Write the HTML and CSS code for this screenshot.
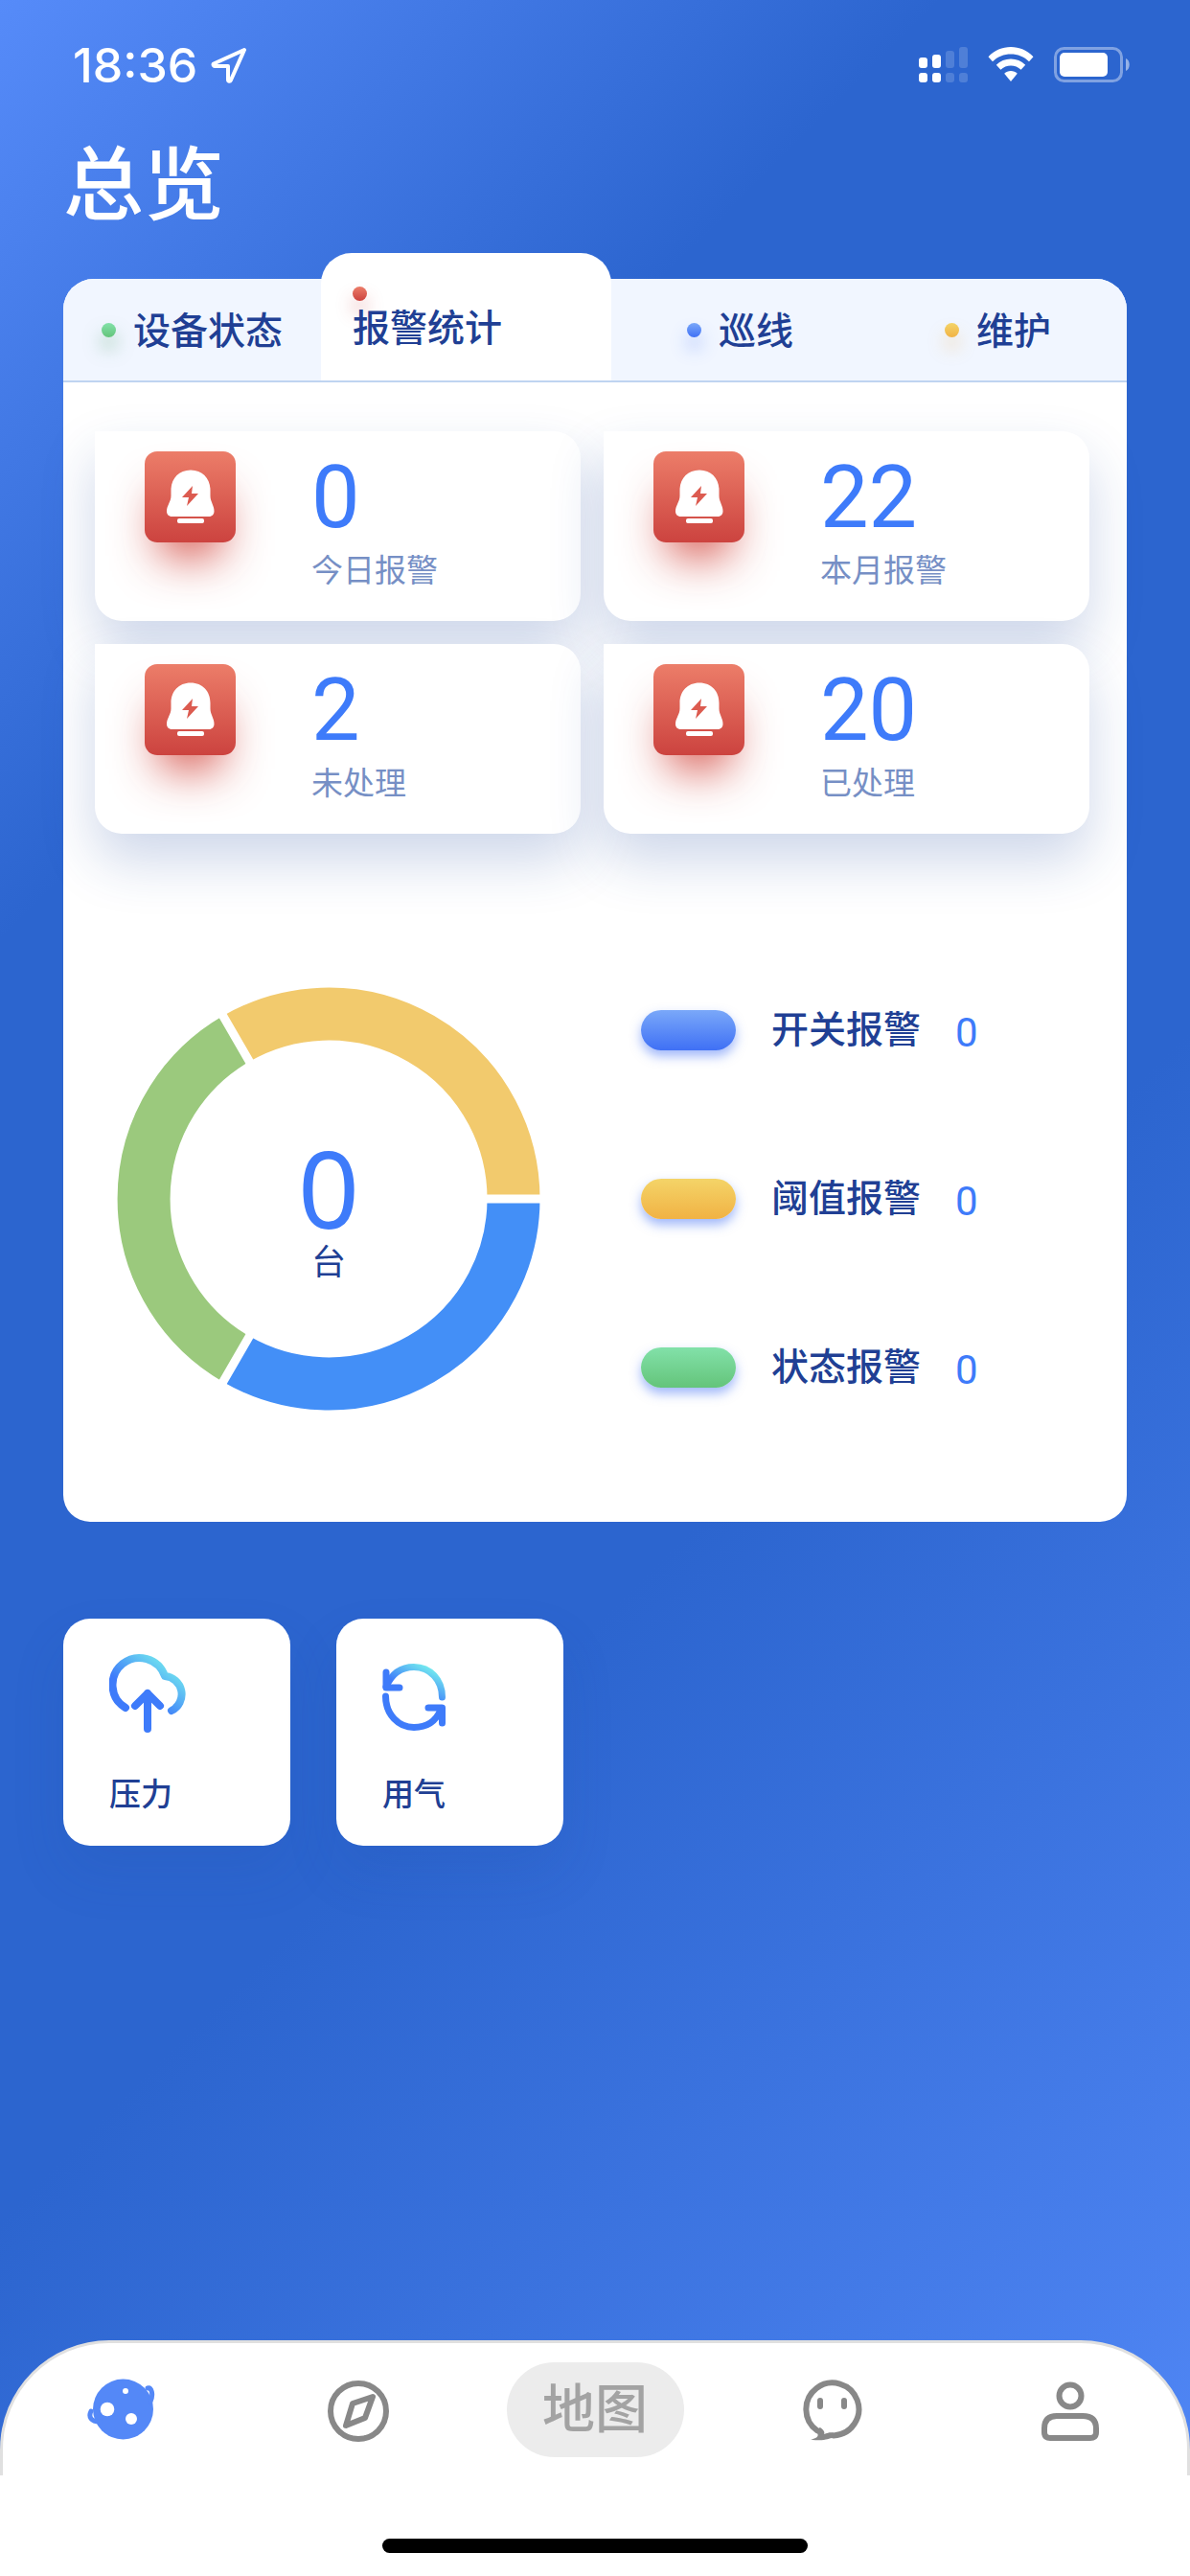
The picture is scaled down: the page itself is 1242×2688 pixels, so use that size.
FILE: index.html
```html
<!DOCTYPE html>
<html lang="zh-CN">

<head>
  <meta charset="UTF-8">
  <meta name="viewport" content="width=device-width, initial-scale=1.0">
  <title>总览</title>
  <link rel="stylesheet" href="styles.css">
</head>

<body>
  <!-- 公用图形 -->
  <svg class="defs" aria-hidden="true">
    <defs>
      <linearGradient id="cyan" x1="0.3" y1="0.65" x2="0.85" y2="0.1">
        <stop offset="0" stop-color="#3e7bfa" />
        <stop offset="1" stop-color="#72e8ef" />
      </linearGradient>
      <symbol id="bell" viewBox="0 0 95 95">
        <path fill="#fff" d="M48 19.500c-12.500 0-20.500 9-20.500 21v6c0 6-4.500 10-4.500 16 0 3 2 5.500 5.500 5.500h38.500c3.500 0 5.500-2.500 5.500-5.500 0-6-4-10-4-16v-6c0-12-8-21-20.500-21z" />
        <path fill="#dc5b50" d="M50 36l-11 12h7l-2 9 12-13h-7z" />
        <rect x="34" y="70" width="28" height="5" rx="2" fill="#fff" />
      </symbol>
    </defs>
  </svg>

  <!-- 状态栏 -->
  <header class="status-bar">
    <div class="status-left">
      <span>18:36</span>
      <svg width="38" height="38" viewBox="0 0 38 38" fill="none" stroke="#fff" stroke-width="4" stroke-linejoin="round" stroke-linecap="round">
        <path d="M35 3L3 17.500c-1 1 0 2.500 1 2.500h14v14c0 2 2 2.500 3 .5z" />
      </svg>
    </div>
    <div class="status-right">
      <svg width="51" height="38" viewBox="0 0 51 38" fill="#fff">
        <rect x="0" y="11" width="9" height="11" rx="3" />
        <rect x="14" y="8" width="9" height="14" rx="3" />
        <rect x="28" y="4" width="9" height="18" rx="3" opacity="0.17" />
        <rect x="42" y="0" width="9" height="22" rx="3" opacity="0.17" />
        <rect x="0" y="27" width="9" height="10" rx="3" />
        <rect x="14" y="27" width="9" height="10" rx="3" />
        <rect x="28" y="27" width="9" height="10" rx="3" opacity="0.17" />
        <rect x="42" y="27" width="9" height="10" rx="3" opacity="0.17" />
      </svg>
      <svg width="48" height="38" viewBox="0 0 48 38" fill="#fff">
        <path d="M24 0c9 0 17 3.500 23.500 10.200l-4.500 5C37.700 10 31.200 7.500 24 7.500S10.300 10 5 15.200l-4.500-5C7 3.500 15 0 24 0z" />
        <path d="M24 12.500c5.800 0 11 2.200 15.200 6.300l-4.600 5c-3-2.800-6.600-4.300-10.600-4.300s-7.600 1.500-10.600 4.300l-4.600-5c4.200-4.100 9.400-6.300 15.200-6.300z" />
        <path d="M24 25c2.600 0 4.900 1 6.800 2.800L24 36l-6.800-8.200c1.900-1.800 4.200-2.800 6.800-2.800z" />
      </svg>
      <svg width="80" height="38" viewBox="0 0 80 38">
        <rect x="1.500" y="1.500" width="69" height="34" rx="9" fill="none" stroke="#fff" stroke-opacity="0.4" stroke-width="3" />
        <rect x="6" y="6" width="50" height="25" rx="5" fill="#fff" />
        <path d="M75 12c5 2 5 11 0 13z" fill="#fff" fill-opacity="0.5" />
      </svg>
    </div>
  </header>

  <main>
    <h1>总览</h1>

    <!-- 统计面板 -->
    <section class="panel">
      <div class="tabs">
        <button class="tab"><i class="dot green"></i><span>设备状态</span></button>
        <button class="tab active"><i class="dot red"></i><span>报警统计</span></button>
        <button class="tab"><i class="dot blue"></i><span>巡线</span></button>
        <button class="tab"><i class="dot yellow"></i><span>维护</span></button>
      </div>

      <div class="stats">
        <div class="stat">
          <svg class="stat-icon"><use href="#bell" /></svg>
          <div class="stat-text">
            <strong>0</strong>
            <span>今日报警</span>
          </div>
        </div>
        <div class="stat">
          <svg class="stat-icon"><use href="#bell" /></svg>
          <div class="stat-text">
            <strong>22</strong>
            <span>本月报警</span>
          </div>
        </div>
        <div class="stat">
          <svg class="stat-icon"><use href="#bell" /></svg>
          <div class="stat-text">
            <strong>2</strong>
            <span>未处理</span>
          </div>
        </div>
        <div class="stat">
          <svg class="stat-icon"><use href="#bell" /></svg>
          <div class="stat-text">
            <strong>20</strong>
            <span>已处理</span>
          </div>
        </div>
      </div>

      <div class="chart">
        <div class="donut">
          <svg viewBox="-221 -221 442 442" fill="none" stroke-width="55">
            <path stroke="#438ff7" d="M193 0A193 193 0 0 1 -96.500 167.100" />
            <path stroke="#9bc97d" d="M-96.500 167.100A193 193 0 0 1 -96.500 -167.100" />
            <path stroke="#f2ca6d" d="M-96.500 -167.100A193 193 0 0 1 193 0" />
            <path stroke="#fff" stroke-width="9" d="M150 0H221M-75 129.900L-111 192.300M-75 -129.900L-111 -192.300" />
          </svg>
          <div class="donut-label">
            <strong>0</strong>
            <span>台</span>
          </div>
        </div>
        <ul class="legend">
          <li><i class="pill blue"></i><span>开关报警</span><b>0</b></li>
          <li><i class="pill yellow"></i><span>阈值报警</span><b>0</b></li>
          <li><i class="pill green"></i><span>状态报警</span><b>0</b></li>
        </ul>
      </div>
    </section>

    <!-- 快捷入口 -->
    <div class="shortcuts">
      <button class="shortcut">
        <svg width="80" height="84" viewBox="0 0 80 84" fill="none" stroke="url(#cyan)" stroke-width="8" stroke-linecap="round" stroke-linejoin="round">
          <path d="M17 58A28 28 0 1 1 58 25A19 19 0 0 1 65 61" />
          <path stroke="#3e7bfa" d="M40 80V43M27 56L40 43L53 56" />
        </svg>
        <span>压力</span>
      </button>
      <button class="shortcut">
        <svg width="80" height="84" viewBox="0 0 80 84" fill="none" stroke="url(#cyan)" stroke-width="7" stroke-linecap="round" stroke-linejoin="round">
          <path d="M4 36C10 22 20 15.500 33 15.500C50 15.500 62.500 29 62.500 47" />
          <path stroke="#3e7bfa" d="M4 21V37H18" />
          <path stroke="#3e7bfa" d="M3.500 46C3.500 65 17 78.500 33 78.500C46 78.500 56 72 61 60" />
          <path stroke="#3e7bfa" d="M48 58H62.500V74" />
        </svg>
        <span>用气</span>
      </button>
    </div>
  </main>

  <!-- 底部导航 -->
  <footer>
    <nav>
      <a href="#" aria-label="首页">
        <svg width="72" height="72" viewBox="0 0 72 72">
          <circle cx="37.500" cy="36" r="31.500" fill="#5488f7" />
          <path d="M63 14c4-1 6.500 6 3 14M4 38c-3 6 0 11 9 11" fill="none" stroke="#5488f7" stroke-width="5" stroke-linecap="round" />
          <circle cx="21" cy="36" r="7.300" fill="#fff" />
          <circle cx="46" cy="46" r="6" fill="#fff" />
          <circle cx="40" cy="17" r="3" fill="#fff" />
        </svg>
      </a>
      <a href="#" aria-label="发现">
        <svg width="72" height="72" viewBox="0 0 72 72" fill="none" stroke="#888" stroke-width="6" stroke-linejoin="round">
          <circle cx="36" cy="38" r="29" />
          <path d="M51 23L30 30L23 53L43 45z" />
        </svg>
      </a>
      <a href="#" class="map">地图</a>
      <a href="#" aria-label="消息">
        <svg width="72" height="72" viewBox="0 0 72 72" fill="none" stroke="#888" stroke-width="6" stroke-linecap="round">
          <path d="M21 58.400A27.500 27.500 0 1 1 38 63.400" />
          <path d="M24 27v6M49 27v6" />
          <path d="M18 58l6-3c4 3 5 5 4 7 4-1.500 6-2 10-1.600v5.600c-6 0-9 4-24 1.500 6-1 9-3 7-6.500z" fill="#888" stroke="none" />
        </svg>
      </a>
      <a href="#" aria-label="我的">
        <svg width="72" height="72" viewBox="0 0 72 72" fill="none" stroke="#888" stroke-width="6">
          <circle cx="38" cy="22" r="11.500" />
          <path d="M24 43H51Q65 43 65 56V60Q65 66 59 66H17Q11 66 11 60V56Q11 43 24 43z" />
        </svg>
      </a>
    </nav>
    <div class="home-area"><div class="home-indicator"></div></div>
  </footer>
</body>

</html>
```
FILE: styles.css
```css
/* 全局样式 */
* {
  box-sizing: border-box;
}

body {
  margin: 0;
  min-height: 100vh;
  display: flex;
  flex-direction: column;
  background: linear-gradient(135deg, #568bf9 0%, #2c65cf 25%, #2c65cf 59%, #5288f7 100%);
  font-family: Roboto, "Noto Sans CJK SC", sans-serif;
  color: #203f94;
}

button {
  border: none;
  background: none;
  padding: 0;
  font: inherit;
  color: inherit;
}

.defs {
  position: absolute;
  width: 0;
  height: 0;
}

/* 状态栏 */
.status-bar {
  display: flex;
  justify-content: space-between;
  align-items: center;
  height: 136px;
  padding: 0 62px 0 76px;
  color: #fff;
  font: 500 50px Inter, sans-serif;
}

.status-left {
  display: flex;
  align-items: center;
  gap: 14px;
}

.status-right {
  display: flex;
  align-items: center;
  gap: 21px;
}

main {
  padding: 0 66px;
}

h1 {
  margin: 0 0 37px;
  font-size: 84px;
  font-weight: 500;
  line-height: 118px;
  color: #fff;
}

/* 统计面板 */
.panel {
  background: #fff;
  border-radius: 32px 32px 28px 28px;
}

.tabs {
  display: flex;
  align-items: flex-end;
  height: 108px;
  background: #f1f6ff;
  border-bottom: 2px solid #bfd4f1;
  border-radius: 32px 32px 0 0;
}

.tab {
  flex: 1;
  display: flex;
  justify-content: center;
  align-items: center;
  gap: 18px;
  height: 106px;
  font-size: 39px;
  font-weight: 500;
  line-height: 54px;
}

.tab span {
  padding-top: 4px;
}

.tab.active {
  flex: 0 0 303px;
  flex-direction: column;
  align-items: flex-start;
  justify-content: flex-start;
  gap: 0;
  height: 133px;
  padding: 35px 33px 0;
  background: #fff;
  border-radius: 32px 32px 0 0;
}

.tab.active span {
  padding-top: 2px;
}

.dot {
  width: 15px;
  height: 15px;
  border-radius: 50%;
}

.green {
  background: linear-gradient(#82e1a9, #64c47a);
}

.red {
  background: linear-gradient(#ec7d69, #cc433f);
}

.blue {
  background: linear-gradient(#7aa8f9, #3f70f5);
}

.yellow {
  background: linear-gradient(#f4d468, #f1b244);
}

.dot.green {
  box-shadow: 0 12px 18px rgba(100, 170, 120, 0.5);
}

.dot.red {
  box-shadow: 0 12px 18px rgba(204, 67, 63, 0.35);
}

.dot.blue {
  box-shadow: 0 12px 18px rgba(63, 112, 245, 0.35);
}

.dot.yellow {
  box-shadow: 0 12px 18px rgba(241, 178, 68, 0.35);
}

/* 报警数量 */
.stats {
  display: grid;
  grid-template-columns: 1fr 1fr;
  gap: 24px;
  padding: 51px 39px 0 33px;
}

.stat {
  display: flex;
  align-items: flex-start;
  gap: 79px;
  height: 198px;
  padding: 21px 0 0 52px;
  background: #fff;
  border-radius: 0 28px 28px 28px;
  box-shadow: 0 28px 56px rgba(30, 73, 159, 0.22);
}

.stat-icon {
  width: 95px;
  height: 95px;
  border-radius: 13px;
  background: linear-gradient(#ec7d69, #cc433f);
  box-shadow: 0 30px 48px -16px rgba(207, 60, 50, 0.9);
}

.stat-text {
  display: flex;
  flex-direction: column;
}

.stat-text strong {
  font-size: 90px;
  font-weight: 400;
  line-height: 98px;
  color: #3e7bfa;
}

.stat-text span {
  font-size: 33px;
  line-height: 54px;
  color: #768fc5;
}

/* 环形图 */
.chart {
  display: flex;
  align-items: center;
  gap: 105px;
  padding: 160px 56px 116px;
}

.donut {
  display: grid;
  width: 442px;
  height: 442px;
}

.donut svg,
.donut-label {
  grid-area: 1 / 1;
}

.donut-label {
  display: flex;
  flex-direction: column;
  align-items: center;
  justify-content: center;
  padding-top: 30px;
}

.donut-label strong {
  font-family: "Noto Sans", sans-serif;
  font-size: 112px;
  font-weight: 400;
  line-height: 104px;
  color: #3e7bfa;
}

.donut-label span {
  font-size: 36px;
  line-height: 54px;
}

.legend {
  display: flex;
  flex-direction: column;
  gap: 122px;
  margin: 0;
  padding: 0;
  list-style: none;
}

.legend li {
  display: flex;
  align-items: center;
  height: 54px;
  font-size: 39px;
  font-weight: 500;
  line-height: 54px;
}

.pill {
  width: 99px;
  height: 42px;
  margin-right: 37px;
  border-radius: 21px;
  box-shadow: 0 6px 12px rgba(63, 112, 245, 0.5);
}

.legend b {
  margin-left: 36px;
  padding-top: 6px;
  font-size: 42px;
  font-weight: 400;
  color: #3e7bfa;
}

/* 快捷入口 */
.shortcuts {
  display: flex;
  gap: 48px;
  padding: 101px 0;
}

.shortcut {
  display: flex;
  flex-direction: column;
  align-items: flex-start;
  gap: 38px;
  width: 237px;
  height: 237px;
  padding: 35px 48px 0;
  background: #fff;
  border-radius: 28px;
  box-shadow: 0 28px 56px rgba(30, 73, 159, 0.12);
  font-size: 33px;
  font-weight: 500;
  line-height: 54px;
}

/* 底部导航 */
footer {
  margin-top: auto;
}

nav {
  display: flex;
  align-items: center;
  height: 141px;
  background: #fff;
  border: 3px solid #e0e0e0;
  border-bottom: none;
  border-radius: 114px 114px 0 0;
}

nav a {
  flex: 1;
  display: flex;
  justify-content: center;
  text-decoration: none;
}

nav a.map {
  flex: 0 0 185px;
  margin: 0 31px;
  background: #ececec;
  border-radius: 50px;
  font-size: 55px;
  font-weight: 500;
  line-height: 99px;
  color: #a3a3a3;
}

.home-area {
  height: 105px;
  padding-top: 66px;
  background: #fff;
}

.home-indicator {
  width: 444px;
  height: 15px;
  margin: 0 auto;
  border-radius: 8px;
  background: #000;
}
```
